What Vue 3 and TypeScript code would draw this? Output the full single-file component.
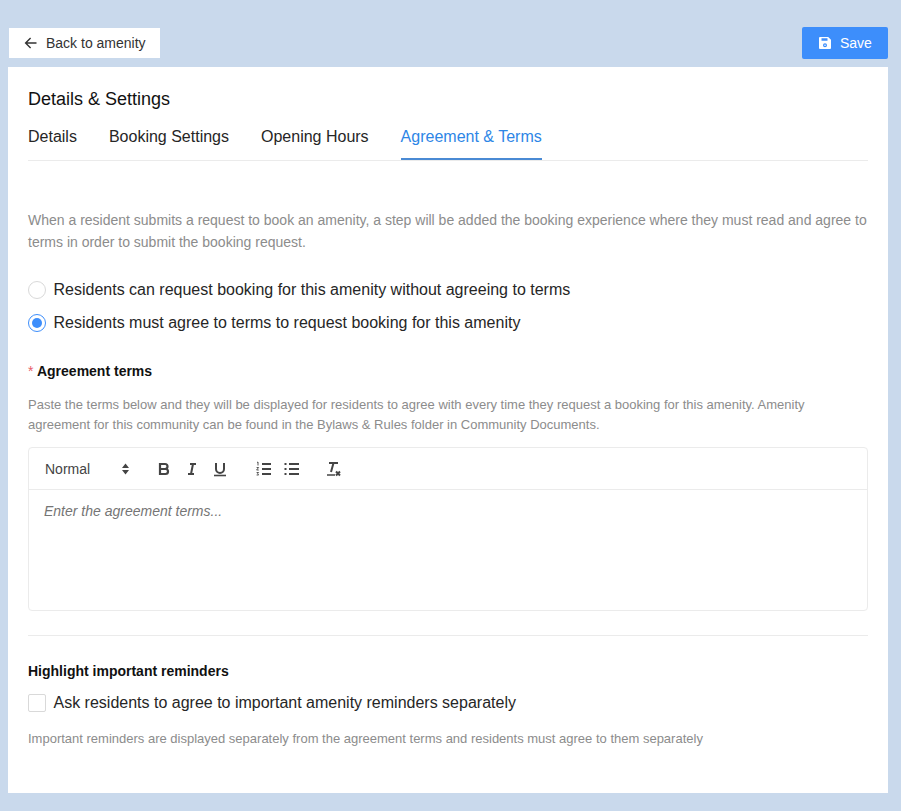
<script setup lang="ts">
const tabs: string[] = ['Details', 'Booking Settings', 'Opening Hours', 'Agreement & Terms']
</script>

<template>
  <div class="page">
    <div class="topbar">
      <button class="back" type="button">
        <svg width="16" height="16" viewBox="0 0 16 16" fill="none" stroke="#333" stroke-width="1.4">
          <path d="M13.5 8H2.8M7.6 3 2.6 8l5 5" />
        </svg>
        <span>Back to amenity</span>
      </button>
      <button class="save" type="button">
        <svg width="14" height="14" viewBox="0 0 14 14">
          <path fill="#fff" fill-rule="evenodd" d="M2 1h8.200L13 3.800V12a1 1 0 0 1-1 1H2a1 1 0 0 1-1-1V2a1 1 0 0 1 1-1Zm1.500 1.200v2.600h6V2.200h-6ZM7 7.200a2 2 0 1 0 0 4 2 2 0 0 0 0-4Zm0 1.200a.8.8 0 1 1 0 1.600.8.8 0 0 1 0-1.600Z" />
        </svg>
        <span>Save</span>
      </button>
    </div>

    <main class="card">
      <h1 class="title">Details &amp; Settings</h1>
      <nav class="tabs">
        <span v-for="(t, i) in tabs" :key="t" class="tab" :class="{ active: i === 3 }">{{ t }}</span>
      </nav>

      <p class="intro">When a resident submits a request to book an amenity, a step will be added the booking experience where they must read and agree to terms in order to submit the booking request.</p>

      <div class="radios">
        <label class="option"><span class="radio"></span>Residents can request booking for this amenity without agreeing to terms</label>
        <label class="option"><span class="radio checked"></span>Residents must agree to terms to request booking for this amenity</label>
      </div>

      <h2 class="label"><span class="req">*</span>Agreement terms</h2>
      <p class="help">Paste the terms below and they will be displayed for residents to agree with every time they request a booking for this amenity. Amenity agreement for this community can be found in the Bylaws &amp; Rules folder in Community Documents.</p>

      <div class="editor">
        <div class="toolbar">
          <span class="select">Normal
            <svg width="9" height="12" viewBox="0 0 9 12" fill="#444"><path d="M4.500 .5 8 5H1zM4.500 11.500 1 7h7z" /></svg>
          </span>
          <span class="group first">
            <svg class="ic" viewBox="0 0 18 18" fill="none" stroke="#444" stroke-width="2.200"><path d="M5 4h5a2.500 2.500 0 0 1 0 5H5zM5 9h5.500a2.500 2.500 0 0 1 0 5H5z" /></svg>
            <svg class="ic" viewBox="0 0 18 18" fill="none" stroke="#444" stroke-width="2"><path d="M7 4h6M5 14h6M10 4 8 14" /></svg>
            <svg class="ic" viewBox="0 0 18 18" fill="none" stroke="#444" stroke-width="2"><path d="M5 3v6a4 4 0 0 0 8 0V3" /><path d="M3 15.500h12" stroke-width="1.600" /></svg>
          </span>
          <span class="group second">
            <svg class="ic" viewBox="0 0 18 18" fill="none" stroke="#444" stroke-width="2"><path d="M7 4h9M7 9h9M7 14h9" /><path d="M2 2.500 3 2v3.500M1.600 7.500h2L1.600 10h2.200M1.600 12.500h2l-1 1.200 1 1.300h-2" stroke-width=".9" /></svg>
            <svg class="ic" viewBox="0 0 18 18" fill="none" stroke="#444" stroke-width="2"><path d="M6 4h10M6 9h10M6 14h10M1.500 4h2M1.500 9h2M1.500 14h2" /></svg>
          </span>
          <span class="group third">
            <svg class="ic" viewBox="0 0 18 18" fill="none" stroke="#444" stroke-width="2"><path d="M5 3h9M9.500 3 7 12" /><path d="M3 15h8" stroke-width="1.500" /><path d="m12 11.500 4 4M16 11.500l-4 4" /></svg>
          </span>
        </div>
        <div class="editor-body">Enter the agreement terms...</div>
      </div>

      <hr class="rule" />

      <h2 class="label plain">Highlight important reminders</h2>
      <label class="option check-row"><span class="checkbox"></span>Ask residents to agree to important amenity reminders separately</label>
      <p class="help note">Important reminders are displayed separately from the agreement terms and residents must agree to them separately</p>
    </main>
  </div>
</template>

<style>
html, body { margin: 0; background: #c9d9ec; }
</style>

<style scoped>
.page {
  box-sizing: border-box;
  width: 901px;
  height: 811px;
  padding: 27px 13px 0 8px;
  background: #c9d9ec;
  font-family: "Liberation Sans", Arial, sans-serif;
  overflow: hidden;
}
.topbar {
  display: flex;
  justify-content: space-between;
  align-items: center;
  height: 32px;
  margin-bottom: 8px;
}
button {
  font-family: inherit;
  font-size: 14px;
  border: 0;
  display: flex;
  align-items: center;
  cursor: pointer;
}
.back {
  margin-left: 1px;
  width: 151px;
  height: 30px;
  padding: 0 0 0 14px;
  gap: 7px;
  background: #fff;
  color: #333;
}
.save {
  width: 86px;
  height: 32px;
  padding: 0 0 0 16px;
  gap: 8px;
  background: #3d8efb;
  color: #fff;
  border-radius: 2px;
}
.card {
  box-sizing: border-box;
  width: 880px;
  height: 726px;
  padding: 20px;
  background: #fff;
}
.title {
  margin: 0;
  font-size: 18px;
  font-weight: 400;
  line-height: 24px;
  color: #111;
}
.tabs {
  display: flex;
  gap: 32px;
  height: 38px;
  margin-top: 11px;
  border-bottom: 1px solid #ebebeb;
}
.tab {
  font-size: 16px;
  line-height: 30px;
  color: #262626;
}
.tab.active {
  color: #2d86e6;
  box-shadow: inset 0 -2px 0 #4a8ad4;
  height: 38px;
}
.intro {
  margin: 48px 0 0;
  font-size: 14px;
  line-height: 22px;
  color: #8c8c8c;
}
.radios {
  margin-top: 26px;
  display: flex;
  flex-direction: column;
  gap: 11px;
}
.option {
  display: flex;
  align-items: center;
  gap: 7.5px;
  height: 22px;
  font-size: 16px;
  color: #262626;
}
.radio {
  box-sizing: border-box;
  width: 18px;
  height: 18px;
  border: 1px solid #d9d9d9;
  border-radius: 50%;
  position: relative;
}
.radio.checked { border-color: #3d8efb; }
.radio.checked::after {
  content: "";
  position: absolute;
  inset: 3px;
  border-radius: 50%;
  background: #3d8efb;
}
.label {
  margin: 26px 0 0;
  font-size: 14px;
  font-weight: 700;
  line-height: 22px;
  color: #111;
}
.req {
  color: #e8606a;
  font-weight: 400;
  margin-right: 3.500px;
}
.help {
  margin: 13px 0 0;
  font-size: 13px;
  line-height: 20px;
  color: #8c8c8c;
}
.editor {
  box-sizing: border-box;
  height: 164px;
  margin-top: 12px;
  border: 1px solid #ebebeb;
  border-radius: 4px;
}
.toolbar {
  box-sizing: border-box;
  height: 42px;
  padding-left: 16px;
  display: flex;
  align-items: center;
  border-bottom: 1px solid #ebebeb;
}
.select {
  width: 85px;
  display: flex;
  justify-content: space-between;
  align-items: center;
  font-size: 14px;
  color: #444;
}
.group {
  display: flex;
  gap: 10px;
}
.first { margin-left: 25px; }
.second { margin-left: 26px; }
.third { margin-left: 23px; }
.ic { width: 18px; height: 18px; }
.editor-body {
  padding: 12px 15px;
  font-size: 14px;
  font-style: italic;
  line-height: 18px;
  color: #757575;
}
.rule {
  margin: 24px 0 0;
  border: 0;
  border-top: 1px solid #ebebeb;
}
.plain { margin-top: 24px; }
.check-row { margin-top: 10px; }
.checkbox {
  box-sizing: border-box;
  width: 18px;
  height: 18px;
  border: 1px solid #d9d9d9;
  border-radius: 2px;
}
.note { margin-top: 15px; }
</style>
